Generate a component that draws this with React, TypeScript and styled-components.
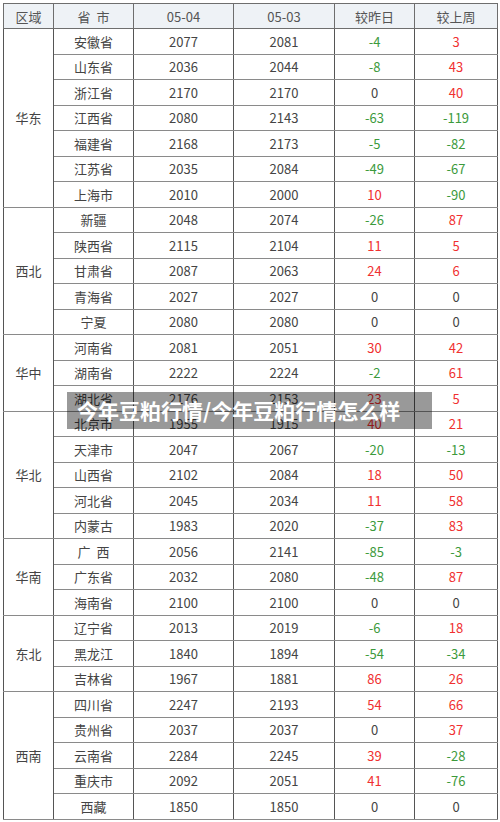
import React from "react";
import styled, { createGlobalStyle } from "styled-components";

const GlobalStyle = createGlobalStyle`
  html, body {
    margin: 0;
    padding: 0;
    background: #fff;
  }
  body {
    font-family: "Noto Sans CJK SC", "Noto Sans", sans-serif;
    color: #444;
  }
`;

type Row = [string, number, number, number, number];

const groups: { region: string; rows: Row[] }[] = [
  {
    region: "华东",
    rows: [
      ["安徽省", 2077, 2081, -4, 3],
      ["山东省", 2036, 2044, -8, 43],
      ["浙江省", 2170, 2170, 0, 40],
      ["江西省", 2080, 2143, -63, -119],
      ["福建省", 2168, 2173, -5, -82],
      ["江苏省", 2035, 2084, -49, -67],
      ["上海市", 2010, 2000, 10, -90],
    ],
  },
  {
    region: "西北",
    rows: [
      ["新疆", 2048, 2074, -26, 87],
      ["陕西省", 2115, 2104, 11, 5],
      ["甘肃省", 2087, 2063, 24, 6],
      ["青海省", 2027, 2027, 0, 0],
      ["宁夏", 2080, 2080, 0, 0],
    ],
  },
  {
    region: "华中",
    rows: [
      ["河南省", 2081, 2051, 30, 42],
      ["湖南省", 2222, 2224, -2, 61],
      ["湖北省", 2176, 2153, 23, 5],
    ],
  },
  {
    region: "华北",
    rows: [
      ["北京市", 1955, 1915, 40, 21],
      ["天津市", 2047, 2067, -20, -13],
      ["山西省", 2102, 2084, 18, 50],
      ["河北省", 2045, 2034, 11, 58],
      ["内蒙古", 1983, 2020, -37, 83],
    ],
  },
  {
    region: "华南",
    rows: [
      ["广  西", 2056, 2141, -85, -3],
      ["广东省", 2032, 2080, -48, 87],
      ["海南省", 2100, 2100, 0, 0],
    ],
  },
  {
    region: "东北",
    rows: [
      ["辽宁省", 2013, 2019, -6, 18],
      ["黑龙江", 1840, 1894, -54, -34],
      ["吉林省", 1967, 1881, 86, 26],
    ],
  },
  {
    region: "西南",
    rows: [
      ["四川省", 2247, 2193, 54, 66],
      ["贵州省", 2037, 2037, 0, 37],
      ["云南省", 2284, 2245, 39, -28],
      ["重庆市", 2092, 2051, 41, -76],
      ["西藏", 1850, 1850, 0, 0],
    ],
  },
];

export default function App() {
  return (
    <>
      <GlobalStyle />
      <Page>
        <Table>
          <colgroup>
            <col style={{ width: 50 }} />
            <col style={{ width: 80 }} />
            <col style={{ width: 100 }} />
            <col style={{ width: 101 }} />
            <col style={{ width: 80 }} />
            <col style={{ width: 83 }} />
          </colgroup>
          <thead>
            <HeadRow>
              <Th>区域</Th>
              <Th>省&nbsp;&nbsp;市</Th>
              <Th>05-04</Th>
              <Th>05-03</Th>
              <Th>较昨日</Th>
              <Th>较上周</Th>
            </HeadRow>
          </thead>
          <tbody>
            {groups.map((g) =>
              g.rows.map((r, i) => (
                <BodyRow key={g.region + r[0]}>
                  {i === 0 && <Td rowSpan={g.rows.length}>{g.region}</Td>}
                  <Td style={{ whiteSpace: "pre" }}>{r[0]}</Td>
                  <Td>{r[1]}</Td>
                  <Td>{r[2]}</Td>
                  <Change $v={r[3]}>{r[3]}</Change>
                  <Change $v={r[4]}>{r[4]}</Change>
                </BodyRow>
              ))
            )}
          </tbody>
        </Table>
        <Banner>今年豆粕行情/今年豆粕行情怎么样</Banner>
      </Page>
    </>
  );
}

const Page = styled.div`
  position: relative;
  width: 500px;
  padding: 3px 3px 0 3px;
  box-sizing: border-box;
`;

const Table = styled.table`
  width: 494px;
  border-collapse: collapse;
  table-layout: fixed;
  font-size: 13px;
`;

const HeadRow = styled.tr`
  height: 25px;
  background: #eef2f6;
`;

const BodyRow = styled.tr`
  height: 25.5px;
`;

const Th = styled.th`
  font-weight: 400;
  color: #555;
  border: 1px solid #6e6e6e;
  padding: 0;
  text-align: center;
  font-size: 13px;
`;

const Td = styled.td`
  border-top: 1px solid #8a8a8a;
  border-bottom: 1px solid #8a8a8a;
  border-left: 1px solid #555;
  border-right: 1px solid #555;
  padding: 0;
  text-align: center;
  color: #444;
  line-height: 1;
`;

const Change = styled(Td)<{ $v: number }>`
  color: ${(p) => (p.$v > 0 ? "#f03030" : p.$v < 0 ? "#3c9a3c" : "#444")};
`;

const Banner = styled.div`
  position: absolute;
  left: 67px;
  top: 392px;
  width: 365px;
  height: 37px;
  box-sizing: border-box;
  padding-left: 10px;
  background: rgba(0, 0, 0, 0.4);
  color: #fff;
  font-weight: 700;
  font-size: 21px;
  line-height: 37px;
  white-space: nowrap;
`;
